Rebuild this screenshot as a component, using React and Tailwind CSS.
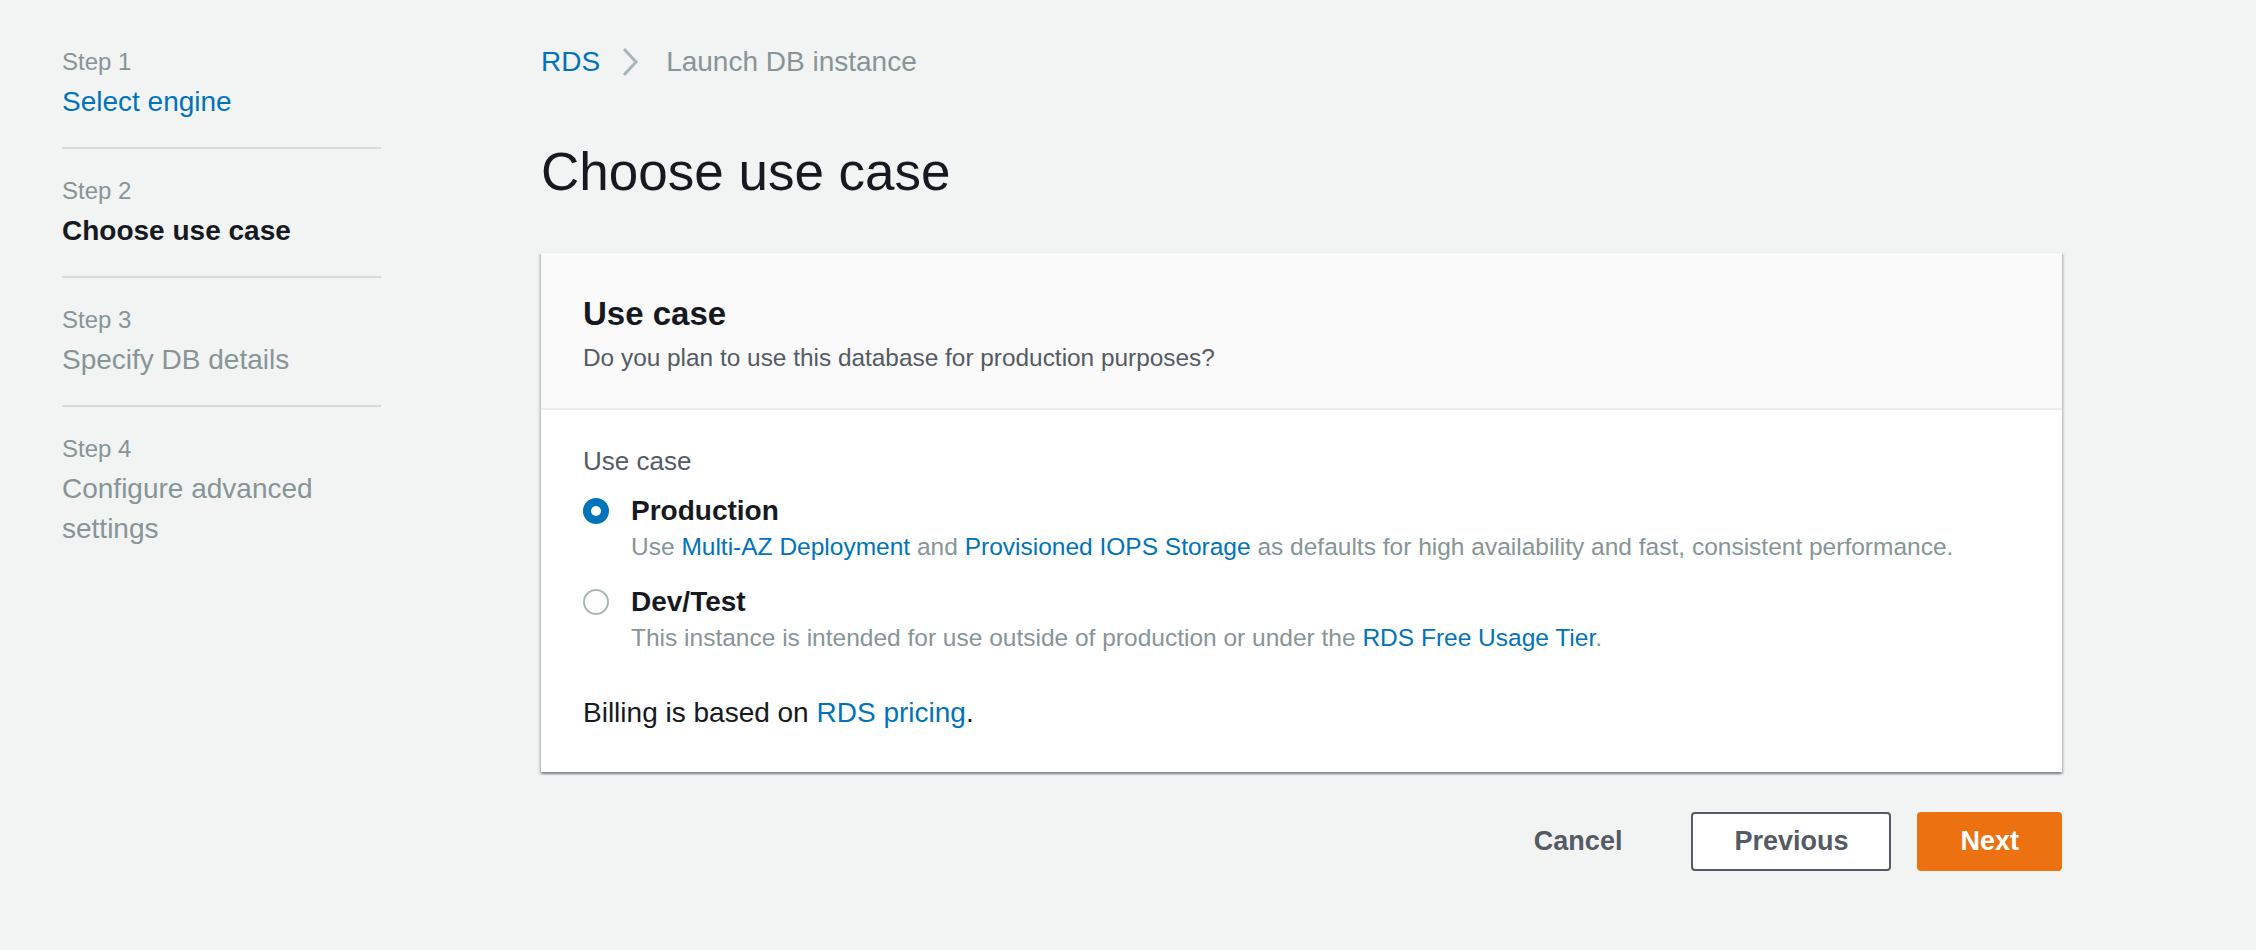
const steps = [
  { label: 'Step 1', title: 'Select engine', state: 'done' },
  { label: 'Step 2', title: 'Choose use case', state: 'active' },
  { label: 'Step 3', title: 'Specify DB details', state: 'todo' },
  { label: 'Step 4', title: 'Configure advanced settings', state: 'todo' },
];

const Link = ({ children }) => (
  <a href="#" className="text-[#0073bb] hover:underline">
    {children}
  </a>
);

const Radio = ({ checked }) =>
  checked ? (
    <span className="flex h-[26px] w-[26px] shrink-0 items-center justify-center rounded-full bg-[#0073bb]">
      <span className="h-[10px] w-[10px] rounded-full bg-white" />
    </span>
  ) : (
    <span className="h-[26px] w-[26px] shrink-0 rounded-full border-2 border-[#aab7b8] bg-white" />
  );

const Option = ({ checked, title, children }) => (
  <label className="flex cursor-pointer flex-col">
    <div className="flex h-[40px] items-center">
      <Radio checked={checked} />
      <span className="ml-[22px] text-[28px] font-bold text-[#16191f]">{title}</span>
    </div>
    <p className="pl-[48px] text-[24.5px] leading-[32px] text-[#879596]">{children}</p>
  </label>
);

export default function App() {
  return (
    <div
      className="flex min-h-[950px] w-full bg-[#f2f3f3] pt-[42px]"
      style={{ fontFamily: '"Liberation Sans", Arial, sans-serif' }}
    >
      {/* wizard steps */}
      <nav className="ml-[62px] w-[319px] shrink-0">
        {steps.map((s, i) => (
          <div
            key={s.label}
            className={`pb-[25px] ${i === 0 ? '' : 'pt-[22px]'} ${
              i === steps.length - 1 ? '' : 'border-b-2 border-[#d5dbdb]'
            }`}
          >
            <div className="text-[24px] leading-[40px] text-[#879596]">{s.label}</div>
            <div
              className={`text-[28px] leading-[40px] ${
                s.state === 'done'
                  ? 'text-[#0073bb]'
                  : s.state === 'active'
                  ? 'font-bold text-[#16191f]'
                  : 'text-[#879596]'
              }`}
            >
              {s.title}
            </div>
          </div>
        ))}
      </nav>

      <main className="ml-[160px] w-[1521px] shrink-0">
        {/* breadcrumb */}
        <div className="flex h-[40px] items-center text-[28px]">
          <a href="#" className="text-[#0073bb]">RDS</a>
          <svg className="ml-[21px] mr-[27px]" width="18" height="30" viewBox="0 0 18 30" fill="none">
            <path d="M3 2 L15 15 L3 28" stroke="#aab7b8" strokeWidth="3" />
          </svg>
          <span className="text-[#879596]">Launch DB instance</span>
        </div>

        <h1 className="mt-[58px] text-[53px] leading-[64px] font-normal text-[#16191f]">Choose use case</h1>

        {/* card */}
        <section className="mt-[48px] bg-white shadow-[0_2px_2px_0_rgba(0,28,36,0.35),2px_2px_2px_0_rgba(0,28,36,0.12),-2px_2px_2px_0_rgba(0,28,36,0.12)] border-t border-[#eaeded]">
          <header className="border-b-2 border-[#eaeded] bg-[#fafafa] px-[42px] pt-[39px] pb-[34px]">
            <h2 className="text-[33px] leading-[44px] font-bold text-[#16191f]">Use case</h2>
            <p className="mt-[6px] text-[24.4px] leading-[32px] text-[#545b64]">
              Do you plan to use this database for production purposes?
            </p>
          </header>

          <div className="px-[42px] pt-[33px] pb-[39px]">
            <div className="text-[26px] leading-[36px] text-[#545b64]">Use case</div>
            <div className="mt-[12px] flex flex-col gap-[19px]">
              <Option checked title="Production">
                Use <Link>Multi-AZ Deployment</Link> and <Link>Provisioned IOPS Storage</Link> as defaults
                for high availability and fast, consistent performance.
              </Option>
              <Option title="Dev/Test">
                This instance is intended for use outside of production or under the{' '}
                <Link>RDS Free Usage Tier</Link>.
              </Option>
            </div>
            <p className="mt-[39px] text-[28px] leading-[40px] text-[#16191f]">
              Billing is based on <Link>RDS pricing</Link>.
            </p>
          </div>
        </section>

        {/* actions */}
        <div className="mt-[40px] flex justify-end gap-[26px]">
          <button className="h-[59px] rounded-[4px] border-2 border-transparent px-[41px] text-[27px] font-bold text-[#545b64]">
            Cancel
          </button>
          <button className="h-[59px] rounded-[4px] border-2 border-[#545b64] bg-white px-[41px] text-[27px] font-bold text-[#545b64]">
            Previous
          </button>
          <button className="h-[59px] rounded-[4px] border-2 border-[#ec7211] bg-[#ec7211] px-[41px] text-[27px] font-bold text-white">
            Next
          </button>
        </div>
      </main>
    </div>
  );
}
